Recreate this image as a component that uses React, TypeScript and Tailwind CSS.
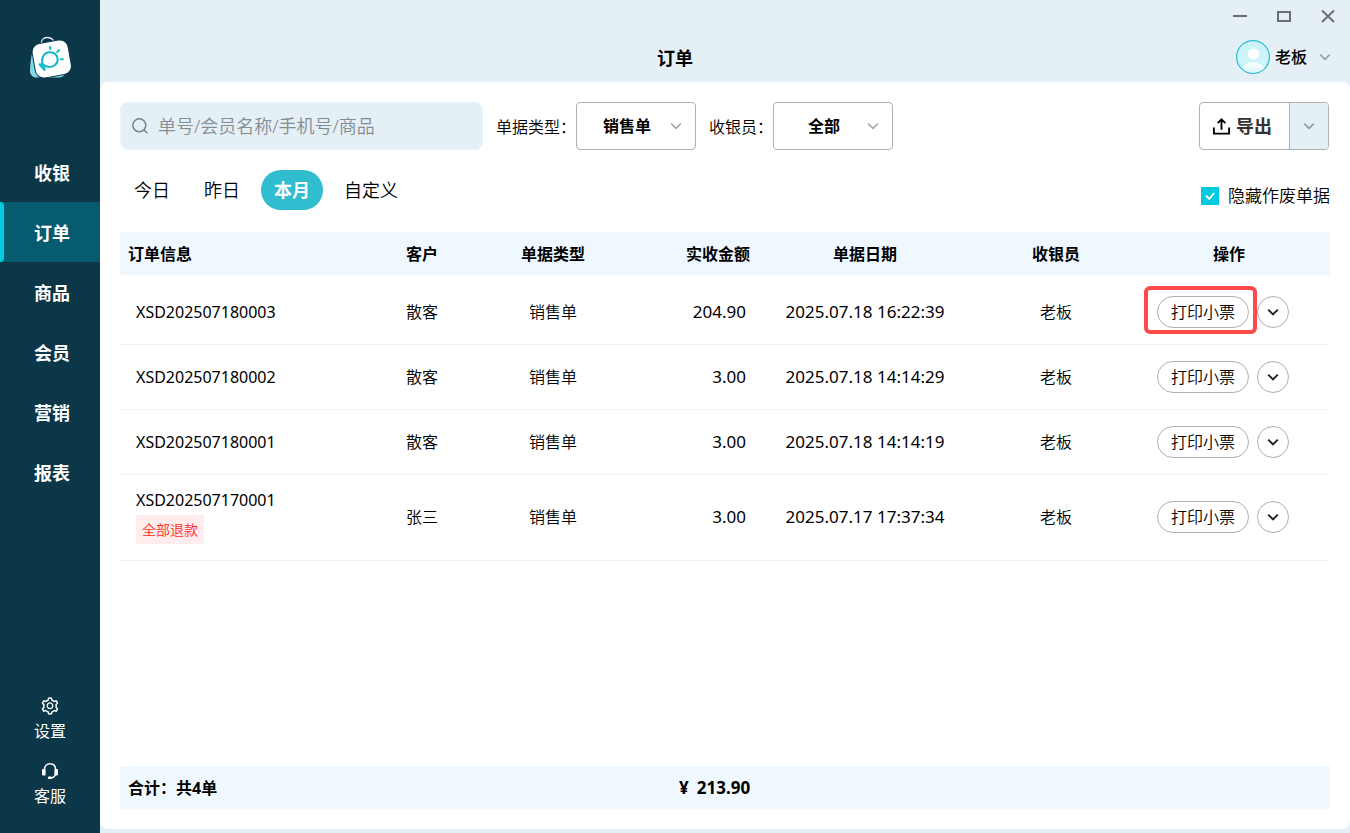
import { useState } from "react";
import type { ReactNode } from "react";
import { AiOutlineSetting } from "react-icons/ai";

type Order = {
  id: string;
  customer: string;
  kind: string;
  amount: string;
  date: string;
  cashier: string;
  tag?: string;
  highlighted?: boolean;
};

const orders: Order[] = [
  { id: "XSD202507180003", customer: "散客", kind: "销售单", amount: "204.90", date: "2025.07.18 16:22:39", cashier: "老板", highlighted: true },
  { id: "XSD202507180002", customer: "散客", kind: "销售单", amount: "3.00", date: "2025.07.18 14:14:29", cashier: "老板" },
  { id: "XSD202507180001", customer: "散客", kind: "销售单", amount: "3.00", date: "2025.07.18 14:14:19", cashier: "老板" },
  { id: "XSD202507170001", customer: "张三", kind: "销售单", amount: "3.00", date: "2025.07.17 17:37:34", cashier: "老板", tag: "全部退款" },
];

const navItems = ["收银", "订单", "商品", "会员", "营销", "报表"];
const ranges = ["今日", "昨日", "本月", "自定义"];

function Chevron({ className }: { className: string }) {
  return (
    <svg viewBox="0 0 12 12" className={className} fill="none" stroke="currentColor" aria-hidden="true">
      <path d="M1.2 3.6 6 8.4l4.8-4.8" />
    </svg>
  );
}

function Logo() {
  return (
    <svg viewBox="0 0 42 42" className="size-[42px]" fill="none" aria-hidden="true">
      <path d="M4 15C2 19 1 30 1 35c0 4 3 6.500 6 6.500h22c4 0 6-1 7.500-4.500z" fill="#7fd9e4" />
      <path d="M12 8.500C12 4 14.500 1.500 18 1.500S24 3 25 6" stroke="#e6f1f5" strokeWidth="1.300" />
      <rect x="4.500" y="5.500" width="36.500" height="35" rx="8.500" transform="rotate(-10 22.500 23)" fill="#fff" stroke="#0b3749" strokeWidth="1" />
      <g stroke="#14b9cd" strokeWidth="2.100" strokeLinecap="round" strokeLinejoin="round">
        <path d="M14 28.800C12 24.500 13.500 16.300 21 16.300c4.500 0 7.700 3 7.700 7.200s-3.700 7.500-8.200 7.500c-3.500 0-4.500-2.500-10-2.700l5 5.700-.3-4" />
        <path d="M21.200 11v2M28.300 16l1.800-1.800M32 23.200h1.800" />
      </g>
    </svg>
  );
}

function HeadsetIcon() {
  return (
    <svg viewBox="0 0 20 20" className="size-5" fill="none" aria-hidden="true">
      <path d="M4.500 8.500C4.500 4.800 6.800 2.800 10 2.800s5.500 2 5.500 5.700" stroke="currentColor" strokeWidth="1.500" />
      <path d="M15.300 13.500c-.5 2.200-2 3.200-4.500 3.500" stroke="currentColor" strokeWidth="1.300" />
      <rect x="2" y="8" width="3.600" height="6.500" rx="1" fill="currentColor" />
      <rect x="14.400" y="8" width="3.600" height="6.500" rx="1" fill="currentColor" />
      <rect x="7.800" y="15.600" width="4.200" height="2.400" rx="1.200" fill="currentColor" />
    </svg>
  );
}

function Filter({ label, id, options }: { label: string; id: string; options: string[] }) {
  return (
    <div className="flex items-center">
      <label htmlFor={id} className="pt-0.5 text-base">{label}</label>
      <div className="relative">
        <select
          id={id}
          className="h-12 w-[120px] appearance-none rounded border border-[#b0b0b0] bg-white pr-[18px] text-center text-base font-bold [text-align-last:center]"
        >
          {options.map((o) => (
            <option key={o}>{o}</option>
          ))}
        </select>
        <Chevron className="pointer-events-none absolute top-[18px] right-3.5 size-3 stroke-[1.5] text-[#a8a8a8]" />
      </div>
    </div>
  );
}

function SideLink({ icon, text }: { icon: ReactNode; text: string }) {
  return (
    <a href="#" className="flex h-[65px] flex-col items-center gap-[3px] text-base leading-6 font-normal">
      {icon}
      <span>{text}</span>
    </a>
  );
}

export default function App() {
  const [active, setActive] = useState("本月");
  const [hideVoid, setHideVoid] = useState(true);

  return (
    <div className="flex min-h-screen bg-[#e4eff6] font-['Noto_Sans','Noto_Sans_CJK_SC',sans-serif] font-[350] text-black">
      <aside className="flex w-[100px] shrink-0 flex-col bg-[#0b3749] text-white">
        <div className="flex h-[142px] justify-center pt-9">
          <Logo />
        </div>
        <nav>
          {navItems.map((item) => (
            <a
              key={item}
              href="#"
              className={
                item === "订单"
                  ? "relative flex h-[60px] items-center justify-center bg-[#075b6e] pt-0.5 pl-1 text-lg font-bold"
                  : "flex h-[60px] items-center justify-center pt-0.5 pl-1 text-lg font-bold"
              }
            >
              {item === "订单" && <span className="absolute inset-y-0 left-0 w-1 rounded-r bg-[#00cbe0]" />}
              {item}
            </a>
          ))}
        </nav>
        <div className="mt-auto pb-[7px]">
          <SideLink icon={<AiOutlineSetting className="size-5" />} text="设置" />
          <SideLink icon={<HeadsetIcon />} text="客服" />
        </div>
      </aside>

      <div className="flex min-w-0 flex-1 flex-col pb-1">
        <header className="h-[82px]">
          <div className="flex h-8 items-center justify-end gap-6 pr-3 text-[#6b6f72]">
            <button type="button" aria-label="最小化">
              <svg viewBox="0 0 20 20" className="size-5" stroke="currentColor" strokeWidth="2"><path d="M3 10h14" /></svg>
            </button>
            <button type="button" aria-label="最大化">
              <svg viewBox="0 0 20 20" className="size-5" fill="none" stroke="currentColor" strokeWidth="2"><path d="M4 6h12v9H4z" /></svg>
            </button>
            <button type="button" aria-label="关闭">
              <svg viewBox="0 0 20 20" className="size-5" stroke="currentColor" strokeWidth="2"><path d="m4 4.500 12 11.500M16 4.500 4 16" /></svg>
            </button>
          </div>
          <div className="flex h-[50px] items-center pr-[19px]">
            <h1 className="flex-1 pt-0.5 pl-3.5 text-center text-lg font-bold">订单</h1>
            <button type="button" className="flex items-center text-base font-medium">
              <svg viewBox="0 0 34 34" className="mr-[5px] size-[34px]" aria-hidden="true">
                <defs>
                  <linearGradient id="avatarBody" x1="0" y1="0" x2="0" y2="1">
                    <stop offset="0" stopColor="#fff" />
                    <stop offset="1" stopColor="#d6f6fa" />
                  </linearGradient>
                </defs>
                <circle cx="17" cy="17" r="16.400" fill="#cdf4f9" stroke="#2fbdcf" strokeWidth="1.200" />
                <circle cx="17.500" cy="14" r="5.600" fill="#fff" />
                <path d="M6.500 28.500C9 24 12.500 22.300 17 22.300s8.500 1.700 11 6.200C22 34 12 34 6.500 28.500z" fill="url(#avatarBody)" />
              </svg>
              老板
              <Chevron className="ml-3 size-3 stroke-[1.5] text-[#9a9fa3]" />
            </button>
          </div>
        </header>

        <main className="flex flex-1 flex-col rounded-lg bg-white p-5">
          <div className="flex items-center gap-[13px]">
            <div className="flex h-12 w-[363px] items-center rounded-lg border border-[#e6f4fb] bg-[#e4eff6] pl-[11px]">
              <svg viewBox="0 0 16 16" className="mr-2.5 size-4 shrink-0" fill="none" stroke="#7b8285" strokeWidth="1.500" aria-hidden="true">
                <circle cx="7.300" cy="7.300" r="6.500" />
                <path d="m11.800 11.800 3.500 3.500" />
              </svg>
              <input
                type="text"
                aria-label="搜索订单"
                placeholder="单号/会员名称/手机号/商品"
                className="min-w-0 flex-1 bg-transparent text-lg outline-none placeholder:text-[#858d91]"
              />
            </div>
            <Filter id="kind" label="单据类型：" options={["销售单", "退货单"]} />
            <Filter id="cashier" label="收银员：" options={["全部", "老板"]} />
            <div className="mr-px ml-auto flex h-12 overflow-hidden rounded border border-[#b0b0b0]">
              <button type="button" className="flex w-[89px] items-center gap-[5px] pl-3 text-lg font-bold text-[#333]">
                <svg viewBox="0 0 20 20" className="size-[19px]" fill="none" stroke="#000" strokeWidth="2" aria-hidden="true">
                  <path d="M2 11v6.500h16V11M10 13.500V3M6 6.500l4-4 4 4" />
                </svg>
                导出
              </button>
              <button type="button" aria-label="更多导出选项" className="flex w-[39px] items-center justify-center border-l border-[#b0b0b0] bg-[#e4eff6]">
                <Chevron className="size-3 stroke-[1.5] text-[#8f979b]" />
              </button>
            </div>
          </div>

          <div className="mt-5 flex items-center justify-between">
            <div className="flex gap-2 pl-px">
              {ranges.map((r) => (
                <button
                  key={r}
                  type="button"
                  onClick={() => setActive(r)}
                  className={
                    r === active
                      ? "h-10 rounded-full bg-[#2fbdcf] px-[13px] text-lg font-bold text-white"
                      : "h-10 rounded-full px-[13px] text-lg"
                  }
                >
                  {r}
                </button>
              ))}
            </div>
            <label className="flex items-center gap-[9px] pt-3 text-[17px]">
              <span className="grid">
                <input
                  type="checkbox"
                  checked={hideVoid}
                  onChange={(e) => setHideVoid(e.target.checked)}
                  className="col-start-1 row-start-1 size-[18px] appearance-none border border-[#00cbe0] bg-white checked:bg-[#00cbe0]"
                />
                {hideVoid && (
                  <svg viewBox="0 0 18 18" className="pointer-events-none col-start-1 row-start-1 size-[18px]" fill="none" stroke="#fff" strokeWidth="1.800" aria-hidden="true">
                    <path d="m5 8.500 3.200 3.300L13.200 6" />
                  </svg>
                )}
              </span>
              隐藏作废单据
            </label>
          </div>

          <table className="mt-[22px] w-full table-fixed border-collapse text-base">
            <colgroup>
              <col />
              <col className="w-[84px]" />
              <col className="w-[178px]" />
              <col className="w-[118px]" />
              <col className="w-[210px]" />
              <col className="w-[172px]" />
              <col className="w-[188px]" />
            </colgroup>
            <thead>
              <tr className="h-[43px] bg-[#eff8ff]">
                <th className="pl-2 text-left">订单信息</th>
                <th>客户</th>
                <th>单据类型</th>
                <th className="pr-2.5 text-right">实收金额</th>
                <th>单据日期</th>
                <th>收银员</th>
                <th className="pr-3.5">操作</th>
              </tr>
            </thead>
            <tbody>
              {orders.map((o) => (
                <tr
                  key={o.id}
                  className={
                    o.tag
                      ? "h-[86px] border-b border-[#f0f2f8] text-center"
                      : "h-[65px] border-b border-[#f0f2f8] text-center first:h-[69px] first:[&>td]:pt-[5px]"
                  }
                >
                  <td className={o.tag ? "pb-0.5 pl-4 text-left" : "pl-4 text-left"}>
                    <span className="font-normal">{o.id}</span>
                    {o.tag && (
                      <div className="mt-[3px]">
                        <span className="inline-block h-[29px] bg-[#ffecec] px-1.5 text-sm leading-[29px] text-[#ff2a1a]">{o.tag}</span>
                      </div>
                    )}
                  </td>
                  <td>{o.customer}</td>
                  <td>{o.kind}</td>
                  <td className="pr-3.5 text-right text-[17px] font-normal">{o.amount}</td>
                  <td className="text-[17px] font-normal">{o.date}</td>
                  <td>{o.cashier}</td>
                  <td>
                    <div className="flex justify-center gap-2 pr-[26px]">
                      <div className="relative">
                        <button type="button" className="h-8 w-[92px] rounded-full border border-[#b0b0b0]">打印小票</button>
                        {o.highlighted && (
                          <span className="pointer-events-none absolute -top-2.5 -right-2 -bottom-1.5 -left-[13px] z-10 rounded-md border-4 border-[#fa4b49]" />
                        )}
                      </div>
                      <button type="button" aria-label="更多操作" className="flex size-8 items-center justify-center rounded-full border border-[#b0b0b0]">
                        <Chevron className="size-3 stroke-2 text-[#222]" />
                      </button>
                    </div>
                  </td>
                </tr>
              ))}
            </tbody>
          </table>

          <div className="mt-auto grid h-[43px] grid-cols-2 items-center bg-[#eff8ff] text-base font-bold">
            <span className="pl-2">合计：共4单</span>
            <span className="-ml-[46px] flex gap-2 text-[17px]">
              <span>¥</span>
              <span>213.90</span>
            </span>
          </div>
        </main>
      </div>
    </div>
  );
}
